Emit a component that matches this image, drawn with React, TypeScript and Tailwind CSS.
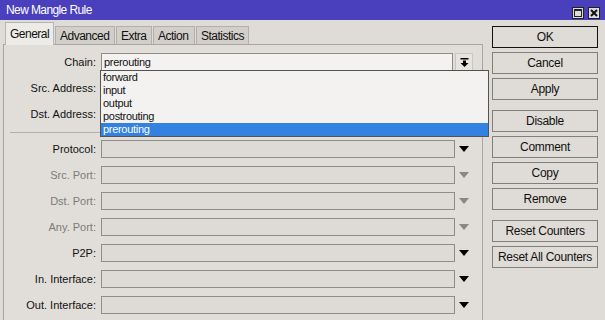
import React from "react";

const font = { fontFamily: '"Liberation Sans", Arial, sans-serif' };

function ArrowDown({ disabled }: { disabled?: boolean }) {
  return (
    <svg width="10" height="6" viewBox="0 0 10 6">
      <polygon points="0,0 10,0 5,6" fill={disabled ? "#8a8884" : "#000"} />
    </svg>
  );
}

function ArrowDownBar() {
  return (
    <svg width="9" height="9" viewBox="0 0 9 9">
      <rect x="0.5" y="0" width="8" height="1.5" fill="#000" />
      <rect x="3" y="2.5" width="3" height="2.5" fill="#000" />
      <polygon points="0.5,5 8.5,5 4.5,9" fill="#000" />
    </svg>
  );
}

function Row({
  label,
  disabled,
  className = "",
}: {
  label: string;
  disabled?: boolean;
  className?: string;
}) {
  return (
    <div className={`flex h-[18px] items-center ${className}`}>
      <div
        className={`w-[93px] pr-[1px] text-right tracking-normal ${disabled ? "text-[#7d7b78]" : "text-[#111]"}`}
      >
        {label}:
      </div>
      <div className="ml-[4px] h-[18px] w-[354px] border border-[#8f8d89] bg-[#dedbd6]" />
      <div className="flex w-[18px] items-center justify-center">
        <ArrowDown disabled={disabled} />
      </div>
    </div>
  );
}

const tabs = ["General", "Advanced", "Extra", "Action", "Statistics"];
const tabW = ["w-[49px]", "w-[60px]", "w-[36px]", "w-[42px]", "w-[53px]"];

const buttons: { label: string; gap?: boolean; focus?: boolean }[] = [
  { label: "OK", focus: true },
  { label: "Cancel" },
  { label: "Apply" },
  { label: "Disable", gap: true },
  { label: "Comment" },
  { label: "Copy" },
  { label: "Remove" },
  { label: "Reset Counters", gap: true },
  { label: "Reset All Counters" },
];

const chains = ["forward", "input", "output", "postrouting", "prerouting"];

export default function App() {
  return (
    <div
      className="flex h-[320px] w-[605px] flex-col overflow-hidden bg-[#dfdcd7] text-[11px] tracking-[-0.3px]"
      style={font}
    >
      {/* Title bar */}
      <div className="flex h-[20px] shrink-0 items-center justify-between bg-[#4a3fbd] pl-[6px] pr-[5px]">
        <span className="text-[12px] tracking-[-0.6px] text-white">New Mangle Rule</span>
        <div className="flex gap-[4px] pt-[5px]">
          <div className="flex h-[12px] w-[12px] items-center justify-center border border-[#222] bg-[#dcdcdc]">
            <div className="h-[8px] w-[8px] border border-t-2 border-[#222]" />
          </div>
          <div className="flex h-[12px] w-[12px] items-center justify-center border border-[#222] bg-[#dcdcdc]">
            <svg width="8" height="8" viewBox="0 0 8 8">
              <path d="M1 1 L7 7 M7 1 L1 7" stroke="#111" strokeWidth="2" />
            </svg>
          </div>
        </div>
      </div>

      <div className="flex flex-1">
        {/* Left: tabs + panel */}
        <div className="ml-[3px] flex w-[480px] flex-col">
          <div className="flex h-[24px] items-end pl-[2px]">
            {tabs.map((t, i) =>
              i === 0 ? (
                <div
                  key={t}
                  className={`${tabW[i]} relative z-10 -mb-px flex h-[23px] items-center border-l border-r border-t border-[#b9b6b1] bg-[#ecebe8] pl-[4px] text-[12px] tracking-[-0.5px] text-[#111]`}
                >
                  {t}
                </div>
              ) : (
                <div
                  key={t}
                  className={`${tabW[i]} ml-[1px] flex h-[18px] items-center border-l border-r border-t border-[#b3b0ab] bg-[#d2cfca] pl-[4px] text-[12px] tracking-[-0.5px] text-[#111]`}
                >
                  {t}
                </div>
              ),
            )}
          </div>

          <div className="relative flex-1 border-l border-r border-t border-[#a9a6a1] bg-[#e1ded9] pt-[8px]">
            {/* Chain */}
            <div className="flex h-[18px] items-center">
              <div className="w-[93px] pr-[1px] text-right tracking-normal text-[#111]">Chain:</div>
              <div className="ml-[4px] flex h-[18px] w-[352px] items-center border border-[#8f8d89] bg-[#f3f2f0] pl-[2px] text-[#111]">
                prerouting
              </div>
              <div className="ml-[2px] flex h-[18px] w-[18px] items-center justify-center border border-[#c9c6c1] bg-[#e6e4e0]">
                <ArrowDownBar />
              </div>
            </div>
            <Row label="Src. Address" className="mt-[8px]" />
            <Row label="Dst. Address" className="mt-[8px]" />

            <div className="mx-[6px] mt-[9px] h-px bg-[#b3b0ab]" />

            <Row label="Protocol" className="mt-[7px]" />
            <Row label="Src. Port" disabled className="mt-[8px]" />
            <Row label="Dst. Port" disabled className="mt-[8px]" />
            <Row label="Any. Port" disabled className="mt-[8px]" />
            <Row label="P2P" className="mt-[8px]" />
            <Row label="In. Interface" className="mt-[8px]" />
            <Row label="Out. Interface" className="mt-[8px]" />

            {/* Chain dropdown list */}
            <div className="absolute left-[96px] top-[25px] z-20 flex h-[67px] w-[389px] flex-col border border-[#55534f] bg-[#f3f2f0] text-[#111]">
              {chains.map((c, i) => (
                <div
                  key={c}
                  className={`flex h-[13px] items-center pl-[2px] leading-[13px] ${
                    i === chains.length - 1 ? "bg-[#3381e0] text-white" : ""
                  }`}
                >
                  {c}
                </div>
              ))}
            </div>
          </div>
        </div>

        {/* Right: buttons */}
        <div className="ml-[9px] flex w-[106px] flex-col gap-[4px] pt-[6px]">
          {buttons.map((b) => (
            <div
              key={b.label}
              className={`flex h-[22px] items-center justify-center border bg-[#dfdcd7] text-[12px] text-[#111] ${
                b.focus ? "border-[#111]" : "border-[#817f7b]"
              } ${b.gap ? "mt-[6px]" : ""}`}
            >
              {b.label}
            </div>
          ))}
        </div>
      </div>
    </div>
  );
}
